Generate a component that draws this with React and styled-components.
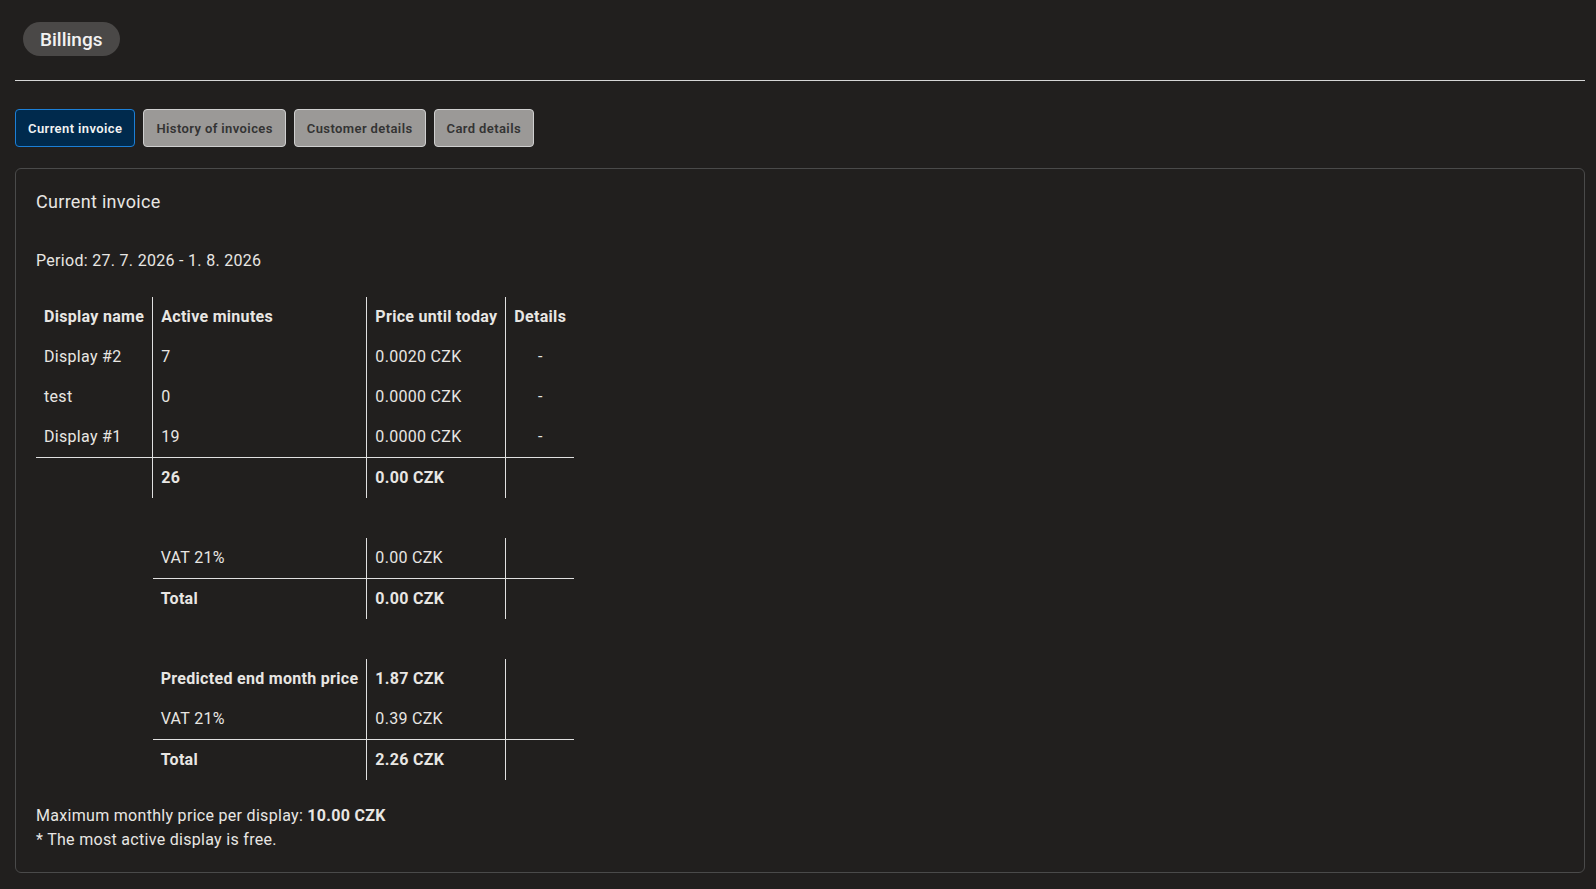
import styled, { createGlobalStyle } from "styled-components";

/*
  Billings page - current invoice tab
*/

const GlobalStyle = createGlobalStyle`
  html, body {
    margin: 0;
    background: #211f1e;
  }

  body {
    font-family: Roboto, "Noto Sans", "Liberation Sans", sans-serif;
    color: #e8e6e3;
  }
`;

const TABS = ["Current invoice", "History of invoices", "Customer details", "Card details"];

const DISPLAYS = [
  { name: "Display #2", minutes: 7, price: "0.0020 CZK" },
  { name: "test", minutes: 0, price: "0.0000 CZK" },
  { name: "Display #1", minutes: 19, price: "0.0000 CZK" },
];

function App() {
  return (
    <Page>
      <GlobalStyle />

      {/* title */}
      <TitlePill>Billings</TitlePill>
      <Divider />

      {/* tabs */}
      <TabBar>
        {TABS.map((tab, i) => (
          <TabButton key={tab} $active={i === 0}>
            {tab}
          </TabButton>
        ))}
      </TabBar>

      {/* invoice panel */}
      <Panel>
        <PanelTitle>Current invoice</PanelTitle>
        <Period>Period: 27. 7. 2026 - 1. 8. 2026</Period>

        <InvoiceTable>
          <tbody>
            <tr>
              <Cell $right $bold>Display name</Cell>
              <Cell $right $bold>Active minutes</Cell>
              <Cell $right $bold>Price until today</Cell>
              <Cell $bold>Details</Cell>
            </tr>

            {DISPLAYS.map((d) => (
              <tr key={d.name}>
                <Cell $right>{d.name}</Cell>
                <Cell $right>{d.minutes}</Cell>
                <Cell $right>{d.price}</Cell>
                <Cell $center>-</Cell>
              </tr>
            ))}

            <tr>
              <Cell $right $top />
              <Cell $right $top $bold>26</Cell>
              <Cell $right $top $bold>0.00 CZK</Cell>
              <Cell $top />
            </tr>

            <Spacer><td colSpan={4} /></Spacer>

            {/* VAT */}
            <tr>
              <Cell />
              <Cell $right>VAT 21%</Cell>
              <Cell $right>0.00 CZK</Cell>
              <Cell />
            </tr>
            <tr>
              <Cell />
              <Cell $right $top $bold>Total</Cell>
              <Cell $right $top $bold>0.00 CZK</Cell>
              <Cell $top />
            </tr>

            <Spacer><td colSpan={4} /></Spacer>

            {/* predicted */}
            <tr>
              <Cell />
              <Cell $right $bold>Predicted end month price</Cell>
              <Cell $right $bold>1.87 CZK</Cell>
              <Cell />
            </tr>
            <tr>
              <Cell />
              <Cell $right>VAT 21%</Cell>
              <Cell $right>0.39 CZK</Cell>
              <Cell />
            </tr>
            <tr>
              <Cell />
              <Cell $right $top $bold>Total</Cell>
              <Cell $right $top $bold>2.26 CZK</Cell>
              <Cell $top />
            </tr>
          </tbody>
        </InvoiceTable>

        <Footer>
          <div>
            Maximum monthly price per display: <b>10.00 CZK</b>
          </div>
          <div>* The most active display is free.</div>
        </Footer>
      </Panel>
    </Page>
  );
}

export default App;

/* styles */

const Page = styled.div`
  padding: 22px 11px 18px 15px;
`;

const TitlePill = styled.div`
  display: inline-flex;
  align-items: center;
  height: 34px;
  margin-left: 8px;
  padding: 0 17px;
  border-radius: 17px;
  background: #4a4847;
  color: #f2f2f2;
  font-size: 19px;
  font-weight: 500;
`;

const Divider = styled.hr`
  margin: 24px 0 0;
  border: none;
  border-top: 1px solid #d6d6d6;
`;

const TabBar = styled.div`
  display: flex;
  gap: 8px;
  margin-top: 28px;
`;

const TabButton = styled.button`
  height: 38px;
  padding: 0 12px;
  border-radius: 4px;
  border: 1px solid ${(p) => (p.$active ? "#1c7fd6" : "#cfcfcf")};
  background: ${(p) => (p.$active ? "#002a4d" : "#9b9997")};
  color: ${(p) => (p.$active ? "#f2f2f2" : "#333333")};
  font-family: inherit;
  font-size: 13px;
  font-weight: 600;
  letter-spacing: 0.4px;
  cursor: pointer;
`;

const Panel = styled.div`
  margin-top: 21px;
  padding: 20px;
  border: 1px solid #4a4a4a;
  border-radius: 6px;
  letter-spacing: 0.3px;
`;

const PanelTitle = styled.div`
  font-size: 18px;
  line-height: 26px;
`;

const Period = styled.div`
  margin-top: 34px;
  font-size: 16px;
  line-height: 24px;
`;

const InvoiceTable = styled.table`
  margin-top: 24px;
  border-collapse: collapse;
  font-size: 16px;
`;

const Cell = styled.td`
  padding: 8px;
  line-height: 24px;
  vertical-align: middle;
  white-space: nowrap;
  font-weight: ${(p) => (p.$bold ? 700 : 400)};
  text-align: ${(p) => (p.$center ? "center" : "left")};
  border-right: ${(p) => (p.$right ? "1px solid #e0e0e0" : "none")};
  border-top: ${(p) => (p.$top ? "1px solid #e0e0e0" : "none")};
`;

const Spacer = styled.tr`
  height: 40px;
`;

const Footer = styled.div`
  margin-top: 24px;
  font-size: 16px;
  line-height: 24px;

  b {
    font-weight: 700;
  }
`;
